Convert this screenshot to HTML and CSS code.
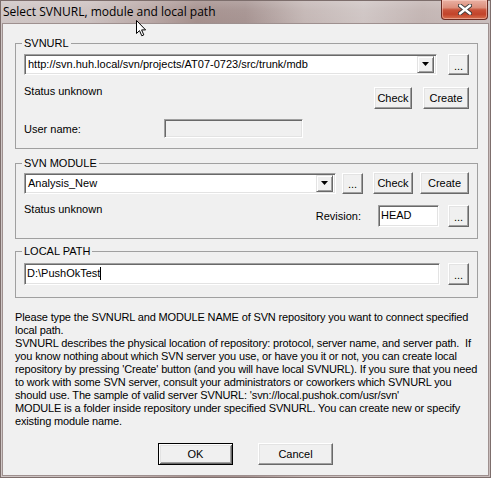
FILE: index.html
```html
<!DOCTYPE html>
<html lang="en">
<head>
<meta charset="utf-8">
<title>Select SVNURL, module and local path</title>
<link rel="stylesheet" href="styles.css">
</head>
<body>
<div class="window">
  <div class="titlebar">
    <span class="title">Select SVNURL, module and local path</span>
    <button class="close" type="button" aria-label="Close">
      <svg width="14" height="11" viewBox="0 0 14 11">
        <path d="M2 1.5 L12 9.5 M12 1.5 L2 9.5" stroke="#3a3a3a" stroke-width="4.2" stroke-linecap="round"/>
        <path d="M2 1.5 L12 9.5 M12 1.5 L2 9.5" stroke="#ffffff" stroke-width="2.4" stroke-linecap="round"/>
      </svg>
    </button>
  </div>

  <div class="client">
    <fieldset class="group group-url">
      <legend>SVNURL</legend>
      <div class="row">
        <div class="combo combo-url">
          <span class="field-text">http://svn.huh.local/svn/projects/AT07-0723/src/trunk/mdb</span>
          <span class="drop"><svg width="7" height="4" viewBox="0 0 7 4"><path d="M0 0H7L3.5 4Z" fill="#000"/></svg></span>
        </div>
        <button class="btn btn-dots btn-short" type="button">...</button>
      </div>
      <div class="row row-status">
        <span class="label">Status unknown</span>
        <div class="actions">
          <button class="btn btn-check" type="button">Check</button>
          <button class="btn btn-create" type="button">Create</button>
        </div>
      </div>
      <div class="row row-user">
        <span class="label label-user">User name:</span>
        <div class="edit edit-user"></div>
      </div>
    </fieldset>

    <fieldset class="group group-module">
      <legend>SVN MODULE</legend>
      <div class="row row-module">
        <div class="combo combo-module">
          <span class="field-text">Analysis_New</span>
          <span class="drop"><svg width="7" height="4" viewBox="0 0 7 4"><path d="M0 0H7L3.5 4Z" fill="#000"/></svg></span>
        </div>
        <button class="btn btn-dots btn-mod-dots" type="button">...</button>
        <button class="btn btn-mod-check" type="button">Check</button>
        <button class="btn btn-mod-create" type="button">Create</button>
      </div>
      <div class="row row-revision">
        <span class="label label-status">Status unknown</span>
        <div class="revision">
          <span class="label">Revision:</span>
          <div class="edit edit-rev"><span class="field-text">HEAD</span></div>
          <button class="btn btn-dots" type="button">...</button>
        </div>
      </div>
    </fieldset>

    <fieldset class="group group-local">
      <legend>LOCAL PATH</legend>
      <div class="row">
        <div class="edit edit-local"><span class="field-text">D:\PushOkTest</span><span class="caret"></span></div>
        <button class="btn btn-dots" type="button">...</button>
      </div>
    </fieldset>

    <div class="help">
      <div class="help-line">Please type the SVNURL and MODULE NAME of SVN repository you want to connect specified</div>
      <div class="help-line">local path.</div>
      <div class="help-line">SVNURL describes the physical location of repository: protocol, server name, and server path.  If</div>
      <div class="help-line">you know nothing about which SVN server you use, or have you it or not, you can create local</div>
      <div class="help-line">repository by pressing 'Create' button (and you will have local SVNURL). If you sure that you need</div>
      <div class="help-line">to work with some SVN server, consult your administrators or coworkers which SVNURL you</div>
      <div class="help-line">should use. The sample of valid server SVNURL: 'svn://local.pushok.com/usr/svn'</div>
      <div class="help-line">MODULE is a folder inside repository under specified SVNURL. You can create new or specify</div>
      <div class="help-line">existing module name.</div>
    </div>

    <div class="dialog-buttons">
      <button class="btn btn-wide btn-default" type="button">OK</button>
      <button class="btn btn-wide" type="button">Cancel</button>
    </div>
  </div>

  <svg class="pointer" width="11" height="17" viewBox="0 0 11 17">
    <path d="M0.5 0.5 V13.5 L3.5 10.6 L5.8 15.8 L7.8 14.9 L5.6 9.9 H9.6 Z" fill="#fff" stroke="#000" stroke-width="1" stroke-linejoin="miter"/>
  </svg>
</div>
</body>
</html>
```

FILE: styles.css
```css
html, body {
  margin: 0;
  padding: 0;
}

body {
  width: 491px;
  height: 478px;
  overflow: hidden;
  font-family: "Liberation Sans", Arial, sans-serif;
  font-size: 11px;
  line-height: 13px;
  color: #000;
  background: #b9abaa;
}

/* Window frame with the glassy caption tint */
.window {
  position: relative;
  box-sizing: border-box;
  width: 491px;
  height: 478px;
  display: flex;
  flex-direction: column;
  padding: 0 3px 3px;
  background:
    linear-gradient(180deg, rgba(255,255,255,0.18) 0%, rgba(255,255,255,0.05) 10px, rgba(0,0,0,0) 24px),
    linear-gradient(90deg, #cfc6c5 0%, #cbc0bf 18%, #b9a8a6 30%, #a48f8c 40%, #a69391 50%, #c4b7b5 62%, #cfc5c4 74%, #c2b4b2 86%, #c9bdbc 100%);
  box-shadow: inset 0 0 0 1px #7d6e6c;
}

.titlebar {
  height: 24px;
  flex: none;
  display: flex;
  align-items: flex-start;
  justify-content: space-between;
}

.title {
  font-family: "Open Sans", "Noto Sans", sans-serif;
  font-size: 12px;
  line-height: 16px;
  margin-top: 4px;
  color: #000;
  white-space: nowrap;
}

.close {
  box-sizing: border-box;
  width: 47px;
  height: 20px;
  margin: 0;
  padding: 0;
  display: flex;
  align-items: center;
  justify-content: center;
  border: 1px solid #6b2b22;
  border-top: none;
  border-radius: 0 0 4px 4px;
  background: linear-gradient(180deg, #eab1a3 0%, #dc8f7c 40%, #c9533a 52%, #c2432a 75%, #d7704f 100%);
  box-shadow: inset 0 0 0 1px rgba(255, 220, 210, 0.45);
}

.client {
  flex: 1;
  box-sizing: border-box;
  background: #f0f0f0;
  padding: 13px 10px 0 12px;
  display: flex;
  flex-direction: column;
  box-shadow: 0 0 0 1px #9e908f;
}

/* Group boxes */
.group {
  box-sizing: border-box;
  width: 463px;
  margin: 0;
  padding: 3px 8px 10px;
  border: 1px solid #a0a0a0;
  min-inline-size: 0;
}

.group legend {
  padding: 0 2px;
  margin-left: -2px;
  line-height: 13px;
}

.group-module {
  margin-top: 8px;
  padding-top: 2px;
  padding-bottom: 11px;
}

.group-local {
  margin-top: 6px;
  padding-top: 5px;
  padding-bottom: 12px;
}

.row {
  display: flex;
  align-items: center;
  justify-content: space-between;
}

.label {
  white-space: nowrap;
}

/* Sunken 3D field borders */
.combo,
.edit {
  box-sizing: border-box;
  position: relative;
  display: flex;
  align-items: center;
  background: #fff;
  border: 1px solid;
  border-color: #a0a0a0 #ffffff #ffffff #a0a0a0;
  box-shadow: inset 1px 1px #696969, inset -1px -1px #e3e3e3;
}

.field-text {
  padding-left: 2px;
  white-space: nowrap;
  overflow: hidden;
}

.combo {
  height: 21px;
  padding: 2px 2px 2px 1px;
}

.combo .field-text {
  flex: 1;
}

.drop {
  box-sizing: border-box;
  width: 17px;
  height: 17px;
  flex: none;
  display: flex;
  align-items: center;
  justify-content: center;
  background: #f0f0f0;
  border: 1px solid;
  border-color: #e3e3e3 #696969 #696969 #e3e3e3;
  box-shadow: inset 1px 1px #fff, inset -1px -1px #a0a0a0;
}

.combo-url {
  width: 413px;
}

.combo-module {
  width: 312px;
}

/* Raised 3D push buttons */
.btn {
  box-sizing: border-box;
  height: 22px;
  margin: 0;
  padding: 0;
  font: inherit;
  line-height: 13px;
  color: #000;
  background: #f0f0f0;
  border: 1px solid;
  border-color: #ffffff #696969 #696969 #ffffff;
  border-radius: 0;
  box-shadow: inset -1px -1px #a0a0a0, inset 1px 1px #e3e3e3;
  flex: none;
}

.btn-dots {
  width: 21px;
  padding-top: 3px;
}

.btn-short {
  height: 21px;
  margin-top: 1px;
}

/* SVNURL group */
.row-status {
  margin-top: 10px;
  align-items: flex-start;
}

.actions {
  display: flex;
  gap: 11px;
  margin-top: 2px;
}

.btn-check {
  width: 38px;
}

.btn-create {
  width: 46px;
}

.row-user {
  margin-top: 10px;
  justify-content: flex-start;
  align-items: flex-start;
}

.label-user {
  width: 140px;
  padding-top: 4px;
}

.edit-user {
  width: 139px;
  height: 19px;
  background: #f0f0f0;
}

/* SVN MODULE group */
.row-module {
  justify-content: flex-start;
}

.btn-mod-dots {
  margin-left: 6px;
  height: 21px;
}

.btn-mod-check {
  margin-left: 10px;
  width: 40px;
}

.btn-mod-create {
  margin-left: 7px;
  width: 49px;
}

.row-revision {
  margin-top: 11px;
  align-items: flex-start;
}

.label-status {
  margin-top: -2px;
}

.revision {
  display: flex;
  align-items: center;
}

.edit-rev {
  width: 61px;
  height: 22px;
  margin-left: 17px;
  margin-right: 9px;
}

.edit-rev .field-text {
  margin-top: -1px;
}

/* LOCAL PATH group */
.edit-local {
  width: 416px;
  height: 22px;
}

.edit-local .field-text {
  padding-left: 2px;
  margin-top: -1px;
}

.caret {
  width: 1px;
  height: 13px;
  margin-top: -1px;
  background: #000;
}

/* Explanation text */
.help {
  margin-top: 13px;
}

.help-line {
  white-space: pre;
  letter-spacing: -0.15px;
  height: 13px;
}

.dialog-buttons {
  margin-top: 15px;
  display: flex;
  justify-content: center;
  gap: 25px;
  padding-right: 2px;
}

.btn-wide {
  width: 75px;
}

.btn-default {
  border-color: #000;
  box-shadow: inset 1px 1px #fff, inset -1px -1px #696969, inset 2px 2px #e3e3e3, inset -2px -2px #a0a0a0;
}

/* Mouse pointer resting on the caption */
.pointer {
  position: absolute;
  left: 136px;
  top: 20px;
}
```
